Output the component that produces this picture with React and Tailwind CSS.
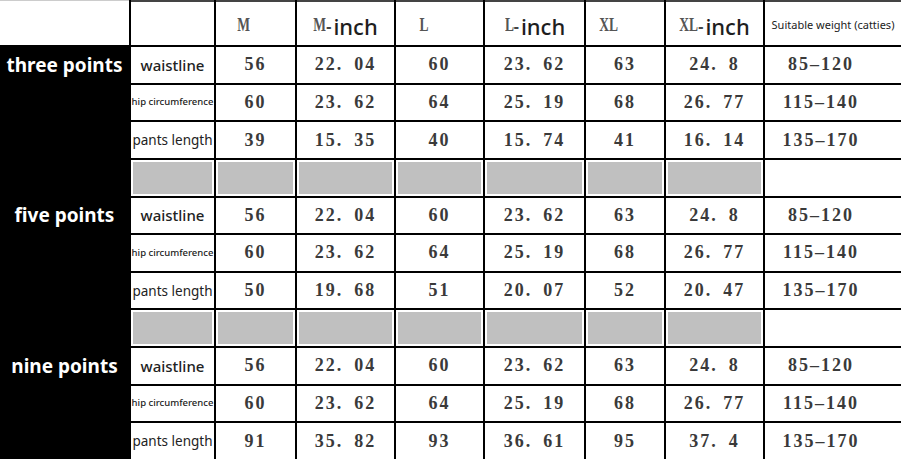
const sans = "font-[family-name:'Noto_Sans',sans-serif]";
const serif = "font-[family-name:'Liberation_Serif',serif]";

const waist = ["56", "22.\u200204", "60", "23.\u200262", "63", "24.\u20028", "85–120"];
const hip = ["60", "23.\u200262", "64", "25.\u200219", "68", "26.\u200277", "115–140"];

const groups = [
  {
    name: "three points",
    pants: ["39", "15.\u200235", "40", "15.\u200274", "41", "16.\u200214", "135–170"],
  },
  {
    name: "five points",
    pants: ["50", "19.\u200268", "51", "20.\u200207", "52", "20.\u200247", "135–170"],
  },
  {
    name: "nine points",
    pants: ["91", "35.\u200282", "93", "36.\u200261", "95", "37.\u20024", "135–170"],
  },
];

const headCell = "bg-white border-t-2 border-[#444] flex items-center justify-center pt-1";

const Size = ({ text, pad }) => (
  <div className={`${headCell} ${pad}`}>
    <span className={`${serif} font-bold text-[18px] text-[#555] scale-x-[0.75] inline-block`}>{text}</span>
  </div>
);

const Inch = ({ size, pull }) => (
  <div className={headCell}>
    <span className={`${serif} font-bold text-[18px] text-[#555] scale-x-[0.75] origin-right inline-block ${pull}`}>{size}</span>
    <span className={`${sans} font-bold text-[16px] text-[#444] mr-[2px]`}>-</span>
    <span className={`${sans} font-medium text-[22px] text-[#1e1e1e] leading-none`}>inch</span>
  </div>
);

const Num = ({ v, last }) => (
  <div className={`bg-white flex items-center justify-center ${last ? "pr-6" : ""}`}>
    <span className={`${serif} font-bold text-[18px] tracking-[2px] text-[#3a3a3a]`}>{v}</span>
  </div>
);

const DataRow = ({ label, labelClass, values, title }) => (
  <>
    <div className="bg-black flex items-center justify-center">
      {title && <span className={`${sans} font-bold text-[19px] text-white whitespace-nowrap`}>{title}</span>}
    </div>
    <div className="bg-white flex items-center justify-center overflow-visible">
      <span className={`${sans} whitespace-nowrap text-[#222] ${labelClass}`}>{label}</span>
    </div>
    {values.map((v, i) => (
      <Num key={i} v={v} last={i === values.length - 1} />
    ))}
  </>
);

const Separator = () => (
  <>
    <div className="bg-black"></div>
    {[0, 1, 2, 3, 4, 5, 6].map((i) => (
      <div key={i} className="bg-white p-[2px]">
        <div className="h-full bg-[#c0c0c0]"></div>
      </div>
    ))}
    <div className="bg-white"></div>
  </>
);

export default function App() {
  return (
    <div className="w-[901px] h-[459px] overflow-hidden bg-white">
      <div className="grid h-[459px] gap-[2px] bg-black grid-cols-[129px_83px_79px_97px_87px_99px_78px_97px_1fr] grid-rows-[45px_repeat(11,minmax(0,1fr))]">
        <div className="bg-white border-t border-[#ccc]"></div>
        <div className={headCell}></div>
        <Size text="M" pad="pr-6" />
        <Inch size="M" pull="-ml-[4px]" />
        <Size text="L" pad="pr-[30px]" />
        <Inch size="L" pull="-ml-[2px]" />
        <Size text="XL" pad="pr-8" />
        <Inch size="XL" pull="-ml-[6px]" />
        <div className={headCell}>
          <span className={`${sans} text-[11px] text-[#222] whitespace-nowrap`}>Suitable weight (catties)</span>
        </div>

        {groups.map((g, gi) => (
          <div key={g.name} className="contents">
            <DataRow title={g.name} label="waistline" labelClass="text-[15px] font-medium" values={waist} />
            <DataRow label="hip circumference" labelClass="text-[9.5px] font-medium" values={hip} />
            <DataRow label="pants length" labelClass="text-[13.5px]" values={g.pants} />
            {gi < groups.length - 1 && <Separator />}
          </div>
        ))}
      </div>
    </div>
  );
}
